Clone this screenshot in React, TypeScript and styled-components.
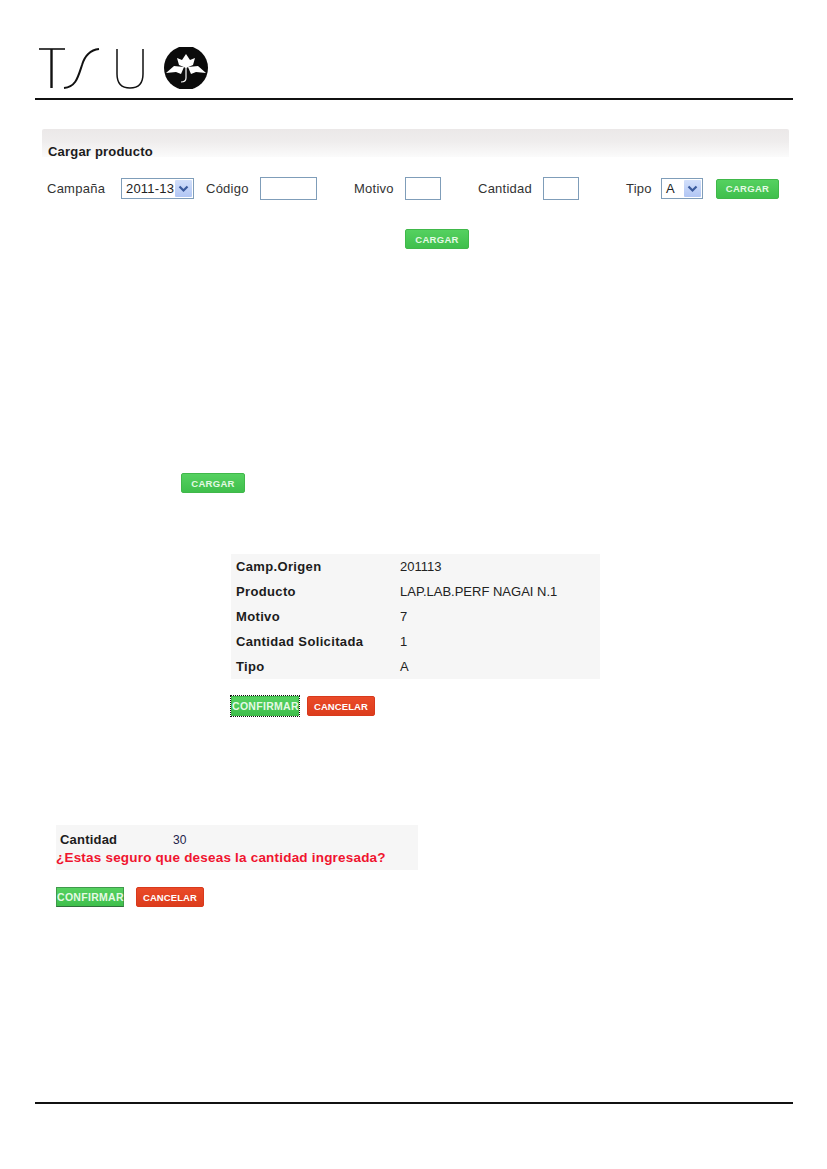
import styled, { createGlobalStyle } from "styled-components";

const GlobalStyle = createGlobalStyle`
  html, body {
    margin: 0;
    padding: 0;
    background: #fff;
  }
  body {
    font-family: "Liberation Sans", Arial, sans-serif;
    color: #222;
  }
`;

const Page = styled.div`
  width: 827px;
  height: 1169px;
  padding: 47px 34px 0 35px;
  box-sizing: border-box;
  display: flex;
  flex-direction: column;
`;

const Header = styled.header`
  height: 51px;
  padding-left: 3px;
  border-bottom: 2px solid #111;
  flex: none;
`;

const Panel = styled.section`
  margin: 29px 4px 0 7px;
`;

const PanelTitle = styled.h2`
  height: 28px;
  margin: 0;
  padding: 15px 0 0 6px;
  box-sizing: border-box;
  font-size: 13px;
  line-height: 15px;
  font-weight: bold;
  letter-spacing: 0.2px;
  color: #1c1c1c;
  background: linear-gradient(#ebe8e8 0%, #efeded 45%, #fbfbfb 100%);
  border-radius: 2px 2px 0 0;
`;

const FormRow = styled.div`
  display: flex;
  align-items: center;
  height: 23px;
  margin-top: 20px;
  padding-left: 5px;
`;

const Label = styled.label<{ $width: number }>`
  width: ${(p) => p.$width}px;
  flex: none;
  font-size: 13px;
  letter-spacing: 0.25px;
  color: #333;
`;

const TextBox = styled.div<{ $width: number; $gap: number }>`
  width: ${(p) => p.$width}px;
  height: 23px;
  margin-right: ${(p) => p.$gap}px;
  box-sizing: border-box;
  flex: none;
  border: 1px solid #7f9db9;
  background: #fff;
`;

const SelectBox = styled.div<{ $width: number; $gap: number }>`
  width: ${(p) => p.$width}px;
  height: 21px;
  margin-right: ${(p) => p.$gap}px;
  box-sizing: border-box;
  flex: none;
  display: flex;
  align-items: center;
  justify-content: space-between;
  padding: 1px 1px 1px 4px;
  border: 1px solid #7f9db9;
  font-size: 13px;
  letter-spacing: 0.2px;
  color: #222;
  background: #fff;
`;

const SelectArrow = styled.span`
  width: 17px;
  height: 17px;
  flex: none;
  display: flex;
  align-items: center;
  justify-content: center;
  border-radius: 1px;
  background: linear-gradient(#d2dffa, #b1c6f4);
`;

const Button = styled.button<{ $tone: "green" | "red"; $w: number; $h?: number; $flat?: boolean; $focus?: boolean }>`
  width: ${(p) => p.$w}px;
  height: ${(p) => p.$h ?? 20}px;
  padding: 0;
  flex: none;
  box-sizing: border-box;
  font-family: "Liberation Sans", Arial, sans-serif;
  font-size: ${(p) => (p.$flat || p.$focus ? 10.5 : 9.5)}px;
  font-weight: bold;
  letter-spacing: ${(p) => (p.$tone === "red" ? 0.1 : 0.3)}px;
  color: ${(p) => (p.$tone === "green" ? "#e4f9e4" : "#fff")};
  border: 1px solid ${(p) => (p.$tone === "green" ? "#40b84a" : "#d8391c")};
  border-radius: ${(p) => (p.$flat || p.$focus ? 0 : 2)}px;
  background: ${(p) =>
    p.$tone === "green"
      ? "linear-gradient(#55d160, #3fbf4c)"
      : "linear-gradient(#ea4a28, #dc3c1c)"};
  ${(p) => p.$focus && "outline: 1px dotted #111; outline-offset: 0;"}
  ${(p) => p.$flat && "border-color: #3f9a4b #3f9a4b #2f6f3a;"}
`;

const ButtonLine = styled.div<{ $top: number; $left: number; $gap: number }>`
  display: flex;
  align-items: center;
  gap: ${(p) => p.$gap}px;
  margin: ${(p) => p.$top}px 0 0 ${(p) => p.$left}px;
  height: 20px;
`;

const SummaryTable = styled.div`
  width: 369px;
  margin: 61px 0 0 196px;
  background: #f6f6f6;
`;

const SummaryRow = styled.div`
  display: grid;
  grid-template-columns: 164px 1fr;
  height: 25px;
  padding-left: 5px;
  align-items: center;
  font-size: 13px;
`;

const Key = styled.span`
  font-weight: bold;
  letter-spacing: 0.35px;
  color: #1c1c1c;
`;

const Value = styled.span`
  color: #222;
`;

const QuantityBox = styled.div`
  width: 362px;
  height: 45px;
  margin: 109px 0 0 21px;
  background: #f6f6f6;
`;

const QuantityRow = styled.div`
  display: grid;
  grid-template-columns: 113px 1fr;
  height: 29px;
  padding: 0 0 0 4px;
  align-items: center;
  font-size: 13px;
`;

const QuantityKey = styled.span`
  font-weight: bold;
  letter-spacing: 0.2px;
  color: #1c1c1c;
`;

const QuantityValue = styled.span`
  font-size: 12px;
  color: #22224a;
`;

const Warning = styled.p`
  margin: -4px 0 0;
  font-size: 13.5px;
  line-height: 16px;
  font-weight: bold;
  letter-spacing: 0.2px;
  color: #f0142f;
`;

const Footer = styled.footer`
  margin-top: 195px;
  border-top: 2px solid #111;
`;

const Logo = () => (
  <svg width="176" height="42" viewBox="0 0 176 42" aria-label="TSU">
    <g fill="none" stroke="#111">
      <path d="M1 2H27" strokeWidth="1.6" />
      <path d="M13.5 2V41" strokeWidth="2.4" />
      <path d="M26 41C38 40 40 30 44 18C47 8 52 3 61 2" strokeWidth="2" />
      <path d="M79 2V27C79 36 83 41 92 41C101 41 105 36 105 27V2" strokeWidth="1.5" />
    </g>
    <circle cx="148" cy="21" r="22" fill="#0b0b0b" />
    <g fill="#fff">
      <path d="M148 7L152 13L157 11L155 18L148 21L141 18L139 11L144 13Z" />
      <path d="M146 20L136 19L128 26L138 25L143 27Z" />
      <path d="M150 20L160 19L168 26L158 25L153 27Z" />
    </g>
    <path d="M148 20V31C148 34 146 35 143 35" fill="none" stroke="#fff" strokeWidth="1.2" />
  </svg>
);

const Chevron = () => (
  <svg width="11" height="8" viewBox="0 0 11 8">
    <path d="M1.5 1.5L5.5 5.5L9.5 1.5" fill="none" stroke="#3a5a9c" strokeWidth="2.2" />
  </svg>
);

const summary = [
  ["Camp.Origen", "201113"],
  ["Producto", "LAP.LAB.PERF NAGAI N.1"],
  ["Motivo", "7"],
  ["Cantidad Solicitada", "1"],
  ["Tipo", "A"],
];

export default function App() {
  return (
    <Page>
      <GlobalStyle />
      <Header>
        <Logo />
      </Header>

      <Panel>
        <PanelTitle>Cargar producto</PanelTitle>
        <FormRow>
          <Label $width={74}>Campaña</Label>
          <SelectBox $width={73} $gap={12}>
            2011-13
            <SelectArrow>
              <Chevron />
            </SelectArrow>
          </SelectBox>
          <Label $width={54}>Código</Label>
          <TextBox $width={57} $gap={37} />
          <Label $width={51}>Motivo</Label>
          <TextBox $width={36} $gap={37} />
          <Label $width={65}>Cantidad</Label>
          <TextBox $width={36} $gap={47} />
          <Label $width={35}>Tipo</Label>
          <SelectBox $width={42} $gap={13}>
            A
            <SelectArrow>
              <Chevron />
            </SelectArrow>
          </SelectBox>
          <Button $tone="green" $w={63}>CARGAR</Button>
        </FormRow>
      </Panel>

      <ButtonLine $top={29} $left={370} $gap={0}>
        <Button $tone="green" $w={64}>CARGAR</Button>
      </ButtonLine>
      <ButtonLine $top={224} $left={146} $gap={0}>
        <Button $tone="green" $w={64}>CARGAR</Button>
      </ButtonLine>

      <SummaryTable>
        {summary.map(([key, value]) => (
          <SummaryRow key={key}>
            <Key>{key}</Key>
            <Value>{value}</Value>
          </SummaryRow>
        ))}
      </SummaryTable>

      <ButtonLine $top={17} $left={196} $gap={8}>
        <Button $tone="green" $w={68} $h={20} $focus>CONFIRMAR</Button>
        <Button $tone="red" $w={68} $flat={false}>CANCELAR</Button>
      </ButtonLine>

      <QuantityBox>
        <QuantityRow>
          <QuantityKey>Cantidad</QuantityKey>
          <QuantityValue>30</QuantityValue>
        </QuantityRow>
        <Warning>¿Estas seguro que deseas la cantidad ingresada?</Warning>
      </QuantityBox>

      <ButtonLine $top={17} $left={21} $gap={12}>
        <Button $tone="green" $w={68} $flat>CONFIRMAR</Button>
        <Button $tone="red" $w={68}>CANCELAR</Button>
      </ButtonLine>

      <Footer />
    </Page>
  );
}
